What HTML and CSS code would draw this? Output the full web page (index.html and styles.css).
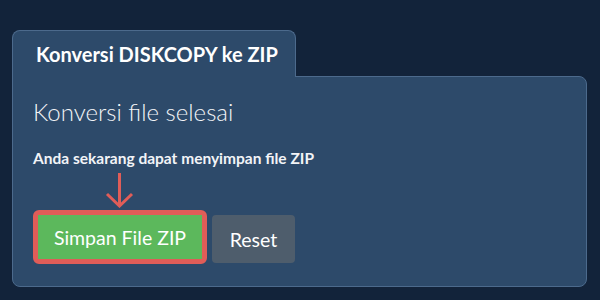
FILE: index.html
```html
<!DOCTYPE html>
<html lang="id">
<head>
  <meta charset="UTF-8">
  <meta name="viewport" content="width=device-width, initial-scale=1.0">
  <title>Konversi DISKCOPY ke ZIP</title>
  <link rel="stylesheet" href="styles.css">
</head>
<body>
  <div class="converter">
    <div class="tab-bar">
      <div class="tab">Konversi DISKCOPY ke ZIP</div>
    </div>
    <div class="panel">
      <div class="status-title">Konversi file selesai</div>
      <div class="status-text">Anda sekarang dapat menyimpan file ZIP</div>
      <div class="actions">
        <div class="save-wrap">
          <!-- panah penunjuk ke tombol simpan -->
          <svg class="pointer" width="30" height="36" viewBox="0 0 30 36">
            <path d="M14.5 1 V34 M2 22 L14.5 34 L27 22" fill="none" stroke="#e05d58" stroke-width="3"/>
          </svg>
          <div class="highlight">
            <button class="btn btn-save">Simpan File ZIP</button>
          </div>
        </div>
        <button class="btn btn-reset">Reset</button>
      </div>
    </div>
  </div>
</body>
</html>
```

FILE: styles.css
```css
body {
  margin: 0;
  padding: 30px 13px 0 12px;
  background-color: #12233a;
  font-family: Lato, "Noto Sans", sans-serif;
  color: #f2f4f7;
}
.converter {
  display: flex;
  flex-direction: column;
}
.tab-bar {
  display: flex;
}
.tab {
  position: relative;
  z-index: 1;
  width: 284px;
  height: 47px;
  margin-bottom: -1px;
  padding-left: 23px;
  box-sizing: border-box;
  display: flex;
  align-items: center;
  font-size: 20px;
  font-weight: bold;
  color: #fff;
  background-color: #2d4a6a;
  border: 1px solid #4c6a8c;
  border-bottom: none;
  border-radius: 8px 8px 0 0;
}
.panel {
  height: 211px;
  box-sizing: border-box;
  padding: 20px 20px 0 20px;
  background-color: #2d4a6a;
  border: 1px solid #4c6a8c;
  border-radius: 0 8px 8px 8px;
}
.status-title {
  font-size: 24px;
  font-weight: 300;
  line-height: 30px;
}
.status-text {
  margin-top: 21px;
  font-size: 15.5px;
  font-weight: bold;
  line-height: 20px;
}
.actions {
  display: flex;
  align-items: flex-start;
  gap: 5px;
  margin-top: 4px;
}
.save-wrap {
  display: flex;
  flex-direction: column;
  align-items: center;
}
.pointer {
  display: block;
  margin-bottom: 2px;
}
.highlight {
  border: 5px solid #e05d58;
  border-radius: 6px;
  display: flex;
}
.btn {
  font-family: Lato, "Noto Sans", sans-serif;
  font-size: 19.5px;
  color: #fff;
  border: none;
  border-radius: 4px;
  cursor: pointer;
}
.btn-save {
  width: 164px;
  height: 44px;
  border-radius: 0;
  background-color: #5cb85c;
}
.btn-reset {
  width: 83px;
  height: 48px;
  margin-top: 43px;
  background-color: #4e5d6c;
}
```
